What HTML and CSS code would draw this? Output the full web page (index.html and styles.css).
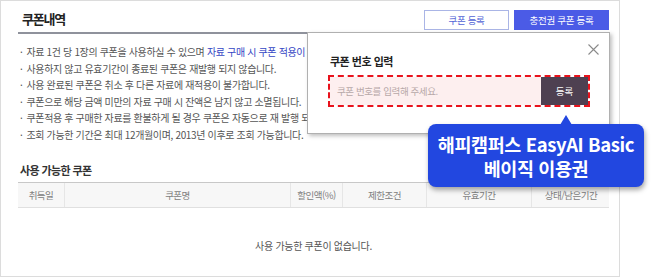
FILE: index.html
```html
<!DOCTYPE html>
<html lang="ko">
<head>
<meta charset="utf-8">
<link rel="stylesheet" href="styles.css">
</head>
<body>
<div class="frame">
  <div class="head">
    <h2 class="title">쿠폰내역</h2>
    <div class="btns">
      <span class="btn btn-line">쿠폰 등록</span>
      <span class="btn btn-fill">충전권 쿠폰 등록</span>
    </div>
  </div>
  <ul class="notes">
    <li>자료 1건 당 1장의 쿠폰을 사용하실 수 있으며 <span class="hl">자료 구매 시 쿠폰 적용이</span></li>
    <li>사용하지 않고 유효기간이 종료된 쿠폰은 재발행 되지 않습니다.</li>
    <li>사용 완료된 쿠폰은 취소 후 다른 자료에 재적용이 불가합니다.</li>
    <li>쿠폰으로 해당 금액 미만의 자료 구매 시 잔액은 남지 않고 소멸됩니다.</li>
    <li>쿠폰적용 후 구매한 자료를 환불하게 될 경우 쿠폰은 자동으로 재 발행 되</li>
    <li>조회 가능한 기간은 최대 12개월이며, 2013년 이후로 조회 가능합니다.</li>
  </ul>
  <h3 class="sub">사용 가능한 쿠폰</h3>
  <div class="table">
    <div class="th c1">취득일</div>
    <div class="th c2">쿠폰명</div>
    <div class="th c3">할인액(%)</div>
    <div class="th c4">제한조건</div>
    <div class="th c5">유효기간</div>
    <div class="th c6">상태/남은기간</div>
  </div>
  <div class="empty">사용 가능한 쿠폰이 없습니다.</div>

  <div class="popup">
    <svg class="close" width="11" height="11" viewBox="0 0 11 11"><path d="M0.5 0.5L10.5 10.5M10.5 0.5L0.5 10.5" stroke="#8a8a8a" stroke-width="1.1" fill="none"/></svg>
    <div class="pop-title">쿠폰 번호 입력</div>
    <div class="field">
      <div class="input">쿠폰 번호를 입력해 주세요.</div>
      <div class="submit">등록</div>
    </div>
  </div>

  <div class="callout">
    <span class="arrow"></span>
    <div class="co-line">해피캠퍼스 EasyAI Basic</div>
    <div class="co-line">베이직 이용권</div>
  </div>
</div>
</body>
</html>
```
FILE: styles.css
```css
* { box-sizing: border-box; }
html, body { margin: 0; padding: 0; background: #fff; }
body {
  width: 653px;
  height: 280px;
  overflow: hidden;
  font-family: "Noto Sans CJK KR", "Noto Sans", sans-serif;
  color: #555;
}
.frame {
  position: relative;
  width: 620px;
  height: 277px;
  border: 1px solid #dcdcdc;
  padding: 0 10px 0 17px;
}
.head {
  height: 33px;
  display: flex;
  align-items: flex-start;
  justify-content: space-between;
  border-bottom: 2px solid #8f929c;
  padding-top: 9px;
}
.title {
  margin: 0;
  padding-left: 4px;
  font-size: 13px;
  line-height: 18px;
  font-weight: 700;
  color: #222;
  letter-spacing: -1.2px;
}
.btns { display: flex; gap: 5px; }
.btn {
  height: 20px;
  display: flex;
  align-items: center;
  justify-content: center;
  font-size: 9.5px;
  letter-spacing: -0.3px;
}
.btn-line {
  width: 85px;
  border: 1px solid #aab5e6;
  color: #5263d6;
  background: #fff;
}
.btn-fill {
  width: 95px;
  background: #4b5be6;
  color: #fff;
}
.notes {
  list-style: none;
  width: 289px;
  margin: 10px 0 0;
  padding: 0 0 0 2px;
  font-size: 10px;
  line-height: 16.6px;
  letter-spacing: -0.35px;
  color: #555;
  white-space: nowrap;
}
.notes li::before {
  content: "·";
  margin-right: 4px;
}
.hl { color: #3446c4; }
.sub {
  margin: 18px 0 0;
  padding-left: 2px;
  font-size: 11px;
  line-height: 16px;
  font-weight: 700;
  color: #333;
  letter-spacing: -0.6px;
}
.table {
  margin-top: 4px;
  display: grid;
  grid-template-columns: 46px 226px 52px 84px 105px 79px;
  border-top: 1px solid #c8c8c8;
  border-bottom: 1px solid #e0e0e0;
  background: #f7f7f7;
}
.th {
  height: 24px;
  display: flex;
  align-items: center;
  justify-content: center;
  font-size: 9.5px;
  color: #808080;
  letter-spacing: -0.5px;
  border-left: 1px solid #e6e6e6;
}
.th.c1 { border-left: 0; }
.empty {
  text-align: center;
  font-size: 10px;
  color: #555;
  letter-spacing: -0.3px;
  margin-top: 31px;
  line-height: 14px;
}
.popup {
  position: absolute;
  left: 306px;
  top: 31px;
  width: 303px;
  height: 102px;
  background: #fff;
  border: 1px solid #b0b0b0;
  box-shadow: 2px 2px 4px rgba(0,0,0,0.25);
  padding: 20px 20px 0 20px;
}
.close {
  position: absolute;
  right: 10px;
  top: 11px;
}
.pop-title {
  font-size: 11px;
  font-weight: 700;
  color: #222;
  line-height: 16px;
  letter-spacing: -0.5px;
  padding-left: 2px;
}
.field {
  margin-top: 6px;
  width: 262px;
  height: 32px;
  border: 2px dashed #e8121c;
  display: flex;
}
.input {
  flex: 1;
  background: #fdefef;
  color: #b7a8a8;
  font-size: 9.5px;
  letter-spacing: -0.4px;
  display: flex;
  align-items: center;
  padding-left: 7px;
}
.submit {
  width: 47px;
  background: #4e4051;
  color: #fff;
  font-size: 9.5px;
  display: flex;
  align-items: center;
  justify-content: center;
}
.callout {
  position: absolute;
  left: 427px;
  top: 123px;
  width: 216px;
  height: 63px;
  background: #2247e0;
  border-radius: 8px;
  box-shadow: 1px 3px 5px rgba(0,0,0,0.35);
  color: #fff;
  display: flex;
  flex-direction: column;
  align-items: center;
  justify-content: center;
  font-family: "Noto Sans CJK KR", "Noto Sans", sans-serif;
  font-weight: 700;
  font-size: 18.5px;
  line-height: 24px;
  letter-spacing: -0.4px;
}
.arrow {
  position: absolute;
  left: 132px;
  top: -9px;
  width: 0;
  height: 0;
  border-left: 6px solid transparent;
  border-right: 6px solid transparent;
  border-bottom: 10px solid #2247e0;
}
```
